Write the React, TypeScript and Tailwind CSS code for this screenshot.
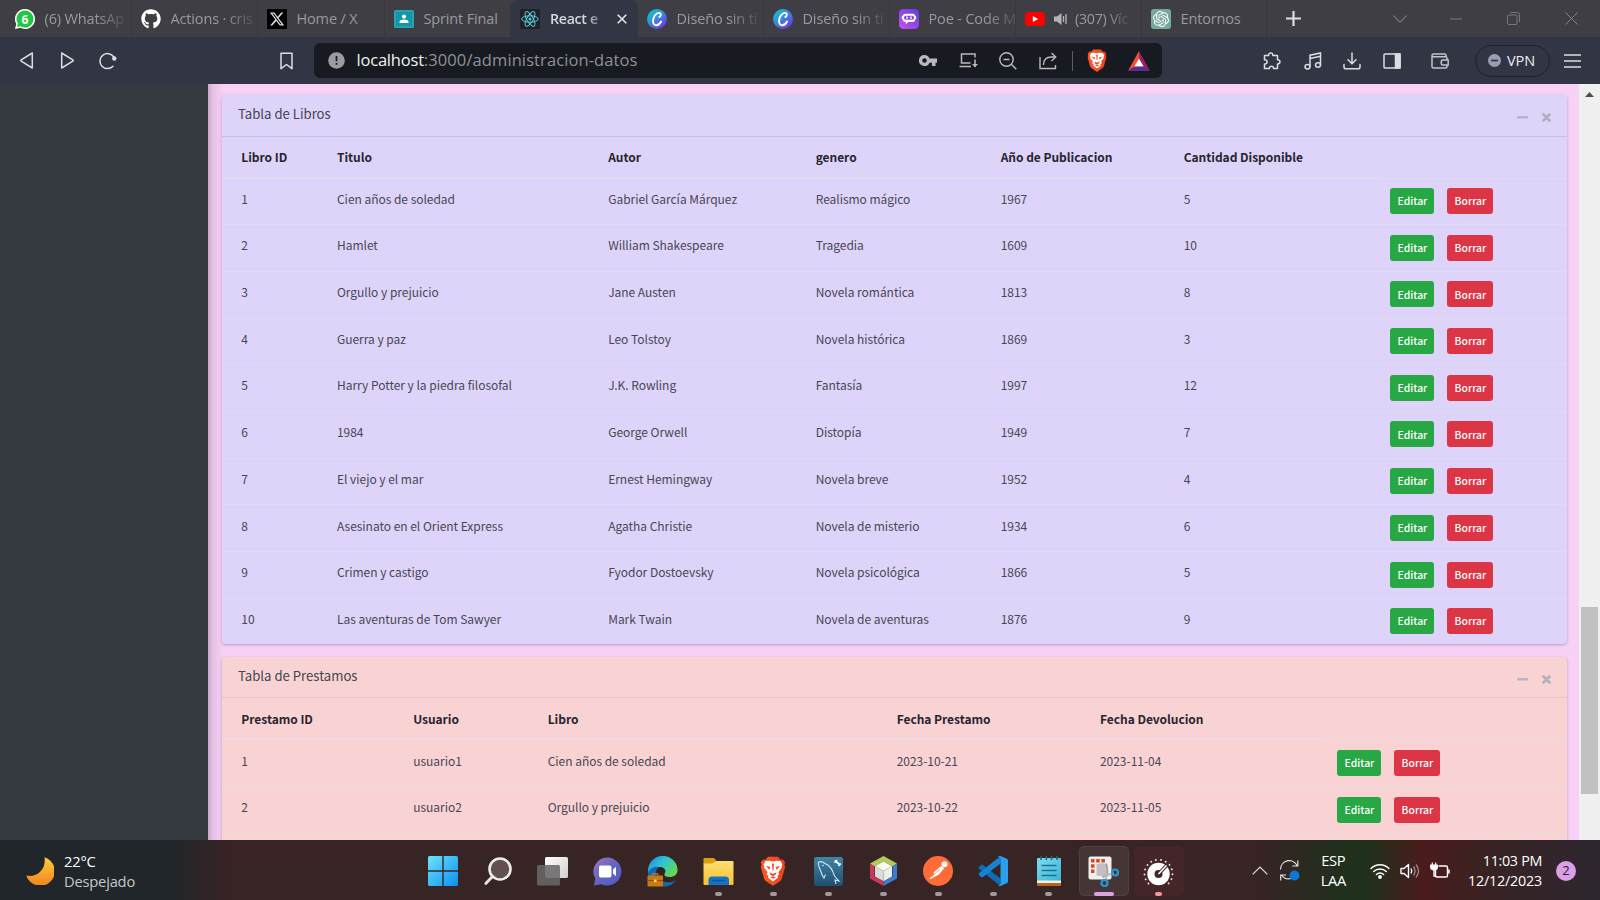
import type { ReactNode } from "react";
import { FaGithub, FaXTwitter } from "react-icons/fa6";
import { SiOpenai } from "react-icons/si";

/* ---------- shared ---------- */

const UI = "font-['Open_Sans','Noto_Sans',sans-serif]";
const BODY = "font-['Noto_Sans_CJK_JP',sans-serif]";

function Brave({ className }: { className: string }) {
  return (
    <svg viewBox="0 0 26 30" className={className}>
      <defs>
        <linearGradient id="brv" x1="0" y1="0" x2="1" y2="0">
          <stop offset="0" stopColor="#fb5a2a" />
          <stop offset="1" stopColor="#f0401a" />
        </linearGradient>
      </defs>
      <path d="M8 .8h10l2.6 2.9 2.3-.3 2.3 3-.8 2.2.8 2.4-3.3 11.4c-.4 1.2-1 2-2 2.8L14 29.3q-1 .6-2 0L6 25.200c-1-.8-1.600-1.600-2-2.800L.8 11l.8-2.400-.8-2.200 2.300-3 2.300.3z" fill="url(#brv)" />
      <path d="M13 5.500l3.500-.7 4 .3 2 3.300-.9 1.800.4 1.400-3.600 4.700.9 2.200-2 1.300 .8 1.600L13 25.500l-5.100-4.100.8-1.600-2-1.300.9-2.200L4 11.600l.4-1.400-.9-1.800 2-3.300 4-.3z" fill="#fff" />
      <path d="M5.800 9.800l4.600 1.200-.8 2.700zM20.200 9.800L15.600 11l.8 2.700zM12 7.500h2l-.5 7h-1zM9.500 16.300l3 1.400h1l3-1.400-.9 2.500-2.600 1.500-2.600-1.500zM10 21.800l3-1.500 3 1.500-3 .6z" fill="#f04b20" />
    </svg>
  );
}

/* ---------- tab strip ---------- */

function Tab({ icon, label, width, fade, sep = true }: { icon: ReactNode; label: string; width: string; fade?: boolean; sep?: boolean }) {
  return (
    <div className={`flex h-full shrink-0 items-center pl-[9px] ${width} ${sep ? "border-r border-[#37373c]" : ""}`}>
      <span className="flex h-5 w-5 shrink-0 items-center justify-center">{icon}</span>
      <span className={`ml-[9.500px] whitespace-nowrap pt-[1px] text-[14.500px] tracking-[-0.15px] text-[#99999e] ${fade ? "[mask-image:linear-gradient(to_right,black_65%,rgba(0,0,0,0.2)_100%)]" : ""}`}>{label}</span>
    </div>
  );
}

function WhatsApp() {
  return (
    <svg viewBox="0 0 20 20" className="h-5 w-5">
      <path d="M10 0a10 10 0 1 1-4.700 18.800L0 20l1.300-5A10 10 0 0 1 10 0z" fill="#fff" />
      <path d="M10 1.500A8.500 8.500 0 1 1 5.500 17.200L2 18l.9-3.400A8.500 8.500 0 0 1 10 1.500z" fill="#1fc743" />
      <text x="10" y="14.500" textAnchor="middle" fontSize="12" fontWeight="700" fill="#fff" fontFamily="Open Sans">6</text>
    </svg>
  );
}

function Classroom() {
  return (
    <svg viewBox="0 0 20 20" className="h-5 w-5">
      <rect x="0" y="1" width="20" height="18" rx="1.500" fill="#26a2b0" />
      <rect x="2" y="3" width="16" height="14" fill="#1495a6" />
      <circle cx="10" cy="7.600" r="2.100" fill="#fff" />
      <path d="M5.500 14v-1c0-1.800 2.400-2.500 4.500-2.500s4.500.7 4.500 2.500v1z" fill="#fff" />
    </svg>
  );
}

function ReactLogo() {
  return (
    <svg viewBox="0 0 20 20" className="h-5 w-5 shrink-0">
      <rect width="20" height="20" rx="2" fill="#1f2326" />
      <g fill="none" stroke="#5bc8dc" strokeWidth="1">
        <ellipse cx="10" cy="10" rx="8.300" ry="3.200" />
        <ellipse cx="10" cy="10" rx="8.300" ry="3.200" transform="rotate(60 10 10)" />
        <ellipse cx="10" cy="10" rx="8.300" ry="3.200" transform="rotate(120 10 10)" />
      </g>
      <circle cx="10" cy="10" r="1.500" fill="#5bc8dc" />
    </svg>
  );
}

function Canva() {
  return (
    <svg viewBox="0 0 20 20" className="h-5 w-5">
      <defs>
        <linearGradient id="cnv" x1="0.100" y1="0.100" x2="0.800" y2="1">
          <stop offset="0" stopColor="#12c3cc" />
          <stop offset="0.500" stopColor="#3d83e0" />
          <stop offset="1" stopColor="#7a2be6" />
        </linearGradient>
      </defs>
      <circle cx="10" cy="10" r="10" fill="url(#cnv)" />
      <path d="M12.300 8c1.700-.6 2.200-3.700.2-4.100C9.200 3.400 6 8 6 12.200c.1 2.600 1.500 4.200 3.400 4.100 2-.1 3.700-1.800 4.700-3.800" fill="none" stroke="#fff" strokeWidth="1.900" strokeLinecap="round" />
    </svg>
  );
}

function Poe() {
  return (
    <svg viewBox="0 0 20 20" className="h-5 w-5">
      <defs>
        <linearGradient id="poe" x1="1" y1="0" x2="0" y2="1">
          <stop offset="0" stopColor="#5b40dc" />
          <stop offset="1" stopColor="#cc4df0" />
        </linearGradient>
      </defs>
      <rect width="20" height="20" rx="4.500" fill="url(#poe)" />
      <path d="M6 4.800h8a2 2 0 0 1 2 1.800c1.700.2 1.700 4 0 4.200a2 2 0 0 1-2 2.200H9.200L6.800 15.500V13H6a2 2 0 0 1-2-2.200c-1.700-.2-1.700-4 0-4.200a2 2 0 0 1 2-1.800z" fill="#fff" />
      <rect x="5" y="6.800" width="10" height="4" rx="1.800" fill="#8a44de" />
      <path d="M8 8v1.600M12 8v1.600" stroke="#fff" strokeWidth="1.400" strokeLinecap="round" />
    </svg>
  );
}

function TabStrip() {
  return (
    <div className="flex h-[37px] shrink-0 items-stretch bg-[#3e3e44] pl-[6px]">
      <Tab icon={<WhatsApp />} label="(6) WhatsAp" width="w-[126px]" fade />
      <Tab icon={<FaGithub className="h-5 w-5 text-white" />} label="Actions · cris" width="w-[126px]" fade />
      <Tab icon={<span className="flex h-5 w-5 items-center justify-center bg-black"><FaXTwitter className="h-4 w-4 text-[#d8d8d8]" /></span>} label="Home / X" width="w-[127px]" />
      <Tab icon={<Classroom />} label="Sprint Final" width="w-[125px]" sep={false} />
      <div className="flex w-[128px] shrink-0 items-center rounded-t-lg bg-[#323544] pl-[10px]">
        <ReactLogo />
        <span className="ml-[10px] w-[51px] whitespace-nowrap pt-[1px] text-[14.200px] font-semibold tracking-[-0.3px] text-[#d5d6dc] [mask-image:linear-gradient(to_right,black_72%,rgba(0,0,0,0.300)_100%)]">React e</span>
        <svg viewBox="0 0 10 10" className="ml-[16px] h-[10px] w-[10px]" stroke="#e4e5ea" strokeWidth="1.600"><path d="M.7.7l8.600 8.600M9.300.7L.7 9.300" /></svg>
      </div>
      <Tab icon={<Canva />} label="Diseño sin tí" width="w-[126px]" fade />
      <Tab icon={<Canva />} label="Diseño sin tí" width="w-[126px]" fade />
      <Tab icon={<Poe />} label="Poe - Code M" width="w-[126px]" fade />
      <div className="flex w-[126px] shrink-0 items-center border-r border-[#37373c] pl-[9px]">
        <svg viewBox="0 0 20 14" className="h-[14px] w-[20px] shrink-0">
          <rect width="20" height="14" rx="3.500" fill="#f00" />
          <path d="M7.800 4v6l5.400-3z" fill="#fff" />
        </svg>
        <svg viewBox="0 0 14 12" className="ml-[9px] h-3 w-[14px] shrink-0" fill="#b5b5b8">
          <path d="M0 3.500h3L7.500 0v12L3 8.500H0z" />
          <path d="M9.500 3v6M12 1v10" stroke="#b5b5b8" strokeWidth="1.300" />
        </svg>
        <span className="ml-[7px] whitespace-nowrap pt-[1px] text-[14.200px] tracking-[-0.25px] text-[#99999e] [mask-image:linear-gradient(to_right,black_60%,rgba(0,0,0,0.2)_100%)]">(307) Víc</span>
      </div>
      <Tab icon={<span className="flex h-5 w-5 items-center justify-center rounded-[3px] bg-[#74aa9c]"><SiOpenai className="h-4 w-4 text-white" /></span>} label="Entornos" width="w-[125px]" />
      <div className="flex flex-1 items-center">
        <svg viewBox="0 0 15 15" className="ml-[19px] h-[15px] w-[15px]" stroke="#dedee2" strokeWidth="2.200"><path d="M7.500 0v15M0 7.500h15" /></svg>
        <svg viewBox="0 0 14 8" className="ml-[92px] h-2 w-[14px]" fill="none" stroke="#77777c" strokeWidth="1.100"><path d="M.5.5L7 7.300 13.500.5" /></svg>
        <svg viewBox="0 0 12 2" className="ml-[43px] h-[2px] w-3" stroke="#77777c"><path d="M0 1h12" /></svg>
        <svg viewBox="0 0 13 13" className="ml-[45px] h-[13px] w-[13px]" fill="none" stroke="#77777c"><rect x=".5" y="3" width="9.500" height="9.500" rx="1" /><path d="M3 .6h7.500a2 2 0 0 1 2 2V10" /></svg>
        <svg viewBox="0 0 13 13" className="ml-[45px] h-[13px] w-[13px]" stroke="#85858a"><path d="M.5.5l12 12M12.500.5l-12 12" /></svg>
      </div>
    </div>
  );
}

/* ---------- address row ---------- */

function Toolbar() {
  return (
    <div className="flex h-[47px] shrink-0 items-center bg-[#323544] text-[#dcdde3]">
      <svg viewBox="0 0 14 17" className="ml-[20px] h-[17px] w-[14px]" fill="none" stroke="currentColor" strokeWidth="1.500" strokeLinejoin="round"><path d="M12.300 1v15L1.200 9.200q-.7-.7 0-1.400z" /></svg>
      <svg viewBox="0 0 14 17" className="ml-[26px] h-[17px] w-[14px]" fill="none" stroke="currentColor" strokeWidth="1.500" strokeLinejoin="round"><path d="M1.700 1v15l11.100-6.800q.7-.7 0-1.400z" /></svg>
      <svg viewBox="0 0 18 18" className="ml-[25px] h-[18px] w-[18px]" fill="none" stroke="currentColor" strokeWidth="1.500"><path d="M14 14.200A7.500 7.500 0 1 1 14.800 5" strokeLinecap="round" /><circle cx="15.300" cy="6.500" r="2.200" fill="currentColor" stroke="none" /></svg>
      <svg viewBox="0 0 13 18" className="ml-[163px] h-[18px] w-[13px]" fill="none" stroke="currentColor" strokeWidth="1.500" strokeLinejoin="round"><path d="M1 1.200h11v15.500l-5.500-4.200L1 16.700z" /></svg>
      <div className="ml-[21px] flex h-[35px] w-[848px] items-center rounded-[6px] bg-[#181a21] pl-[14px] text-[#b9bac0]">
        <svg viewBox="0 0 17 17" className="h-[17px] w-[17px] shrink-0"><circle cx="8.500" cy="8.500" r="8.300" fill="#9b9ca2" /><path d="M8.500 4v5.300M8.500 11v1.800" stroke="#181a21" strokeWidth="1.700" /></svg>
        <span className="ml-[11.500px] w-[562.500px] whitespace-nowrap text-[16.500px] tracking-[0.100px] text-[#8f9197]"><span className="tracking-[-0.2px] text-[#f0f1f4]">localhost</span>:3000/administracion-datos</span>
        <svg viewBox="0 0 18 12" className="h-3 w-[18px] shrink-0" fill="currentColor"><path fillRule="evenodd" d="M5.500 0a5.500 5.500 0 0 1 5 3.500H18v4.200h-1.500V11H13V7.700h-2.500A5.500 5.500 0 1 1 5.500 0zm0 3.200a2.300 2.300 0 1 0 0 4.600 2.300 2.300 0 0 0 0-4.600z" /></svg>
        <svg viewBox="0 0 19 15" className="ml-[22px] h-[15px] w-[19px] shrink-0" fill="none" stroke="currentColor" strokeWidth="1.500"><path d="M11.500 10H2.500V1h13.500v3.500M.5 13.500H12M16 6.500V14" /><path d="M13 11l3 3.300 3-3.300z" fill="currentColor" stroke="none" /></svg>
        <svg viewBox="0 0 18 18" className="ml-[21px] h-[18px] w-[18px] shrink-0" fill="none" stroke="currentColor" strokeWidth="1.400"><circle cx="7.500" cy="7.500" r="6.700" /><path d="M12.300 12.300L17.300 17.300M4.500 7.500h6" /></svg>
        <svg viewBox="0 0 18 18" className="ml-[22px] h-[18px] w-[18px] shrink-0" fill="none" stroke="currentColor" strokeWidth="1.400"><path d="M1 5v11.500h15.500V13M4.500 13c0-5 3-8 8-8h4M12.500 1l4.200 4-4.200 4" /></svg>
        <span className="ml-[15px] h-5 w-px bg-[#5a5c66]" />
        <Brave className="ml-[14px] h-[23px] w-5 shrink-0" />
        <svg viewBox="0 0 22 20" className="ml-[21px] h-5 w-[22px] shrink-0"><path d="M11 0L0 20l7-4.500L11 8z" fill="#f2542d" /><path d="M11 0l11 20-7-4.500L11 8z" fill="#9e1f63" /><path d="M0 20h22l-7-4.500H7z" fill="#5b2d90" /><path d="M11 7.500l4.600 8H6.400z" fill="#fff" /></svg>
      </div>
      <svg viewBox="0 0 18 18" className="ml-[101px] h-[18px] w-[18px]" fill="none" stroke="currentColor" strokeWidth="1.500" strokeLinejoin="round"><path d="M1.500 3.500h4.200c-.5-3.500 4.600-3.500 4.100 0h4.700v4.200c3.300-.4 3.300 4.600 0 4.200v4.600h-4c.3-3-4.300-3-4 0h-5v-4.500c3.500.4 3.500-4.600 0-4.200z" /></svg>
      <svg viewBox="0 0 18 18" className="ml-[23px] h-[18px] w-[18px]" fill="none" stroke="currentColor" strokeWidth="1.500"><path d="M6 14.500V3.200L16.500 1v12M6 6.500l10.500-2.200" /><ellipse cx="3.500" cy="14.800" rx="2.500" ry="2.200" /><ellipse cx="14" cy="13" rx="2.500" ry="2.200" /></svg>
      <svg viewBox="0 0 18 18" className="ml-[21px] h-[18px] w-[18px]" fill="none" stroke="currentColor" strokeWidth="1.500" strokeLinecap="round"><path d="M9 1v10.500M5 7.800l4 4 4-4M1 12.500v2.500q0 1.800 1.800 1.800h12.400q1.800 0 1.800-1.800v-2.500" /></svg>
      <svg viewBox="0 0 18 16" className="ml-[22px] h-4 w-[18px]" fill="none" stroke="currentColor" strokeWidth="1.500"><rect x="1" y="1" width="16" height="14" rx="1" /><path d="M12.500 1h4.500v14h-4.500z" fill="currentColor" /></svg>
      <svg viewBox="0 0 18 16" className="ml-[30px] h-4 w-[18px]" fill="none" stroke="#c3c4cb" strokeWidth="1.500"><path d="M15 4V2.500Q15 1 13.500 1H2.500Q1 1 1 2.500v11Q1 15 2.500 15h12q1.500 0 1.500-1.500V12M1 3.800h13.500Q16 3.800 16 5.300V7M17.200 7h-5.500q-1.500 0-1.500 2.500t1.500 2.500h5.500z" /></svg>
      <div className="ml-[26px] flex h-8 w-[75px] items-center rounded-full border border-[#20222c] pl-[12px] text-[14.500px] tracking-[-0.1px] text-[#eceef3]">
        <svg viewBox="0 0 13 13" className="h-[13px] w-[13px]"><circle cx="6.500" cy="6.500" r="6.500" fill="#9a9eb2" /><path d="M3 6.500h7" stroke="#323544" strokeWidth="1.700" /></svg>
        <span className="ml-[6px]">VPN</span>
      </div>
      <svg viewBox="0 0 17 14" className="ml-[14px] h-[14px] w-[17px]" stroke="currentColor" strokeWidth="1.700"><path d="M0 1h17M0 7h17M0 13h17" /></svg>
    </div>
  );
}

/* ---------- page ---------- */

type Theme = { bg: string; line: string; rule: string; headRule: string };
const lilac: Theme = { bg: "bg-[#ded4f9]", line: "border-[#c9bfe2]", rule: "border-[#dfdbf1]", headRule: "border-[#dfddec]" };
const rose: Theme = { bg: "bg-[#f9d3d4]", line: "border-[#e6c3c5]", rule: "border-[#ebdcdf]", headRule: "border-[#e5dde1]" };

const books = [
  ["Cien años de soledad", "Gabriel García Márquez", "Realismo mágico", "1967", "5"],
  ["Hamlet", "William Shakespeare", "Tragedia", "1609", "10"],
  ["Orgullo y prejuicio", "Jane Austen", "Novela romántica", "1813", "8"],
  ["Guerra y paz", "Leo Tolstoy", "Novela histórica", "1869", "3"],
  ["Harry Potter y la piedra filosofal", "J.K. Rowling", "Fantasía", "1997", "12"],
  ["1984", "George Orwell", "Distopía", "1949", "7"],
  ["El viejo y el mar", "Ernest Hemingway", "Novela breve", "1952", "4"],
  ["Asesinato en el Orient Express", "Agatha Christie", "Novela de misterio", "1934", "6"],
  ["Crimen y castigo", "Fyodor Dostoevsky", "Novela psicológica", "1866", "5"],
  ["Las aventuras de Tom Sawyer", "Mark Twain", "Novela de aventuras", "1876", "9"],
];
const loans = [
  ["usuario1", "Cien años de soledad", "2023-10-21", "2023-11-04"],
  ["usuario2", "Orgullo y prejuicio", "2023-10-22", "2023-11-05"],
];

function DataCard({ title, theme, heads, rows, cols, trailing }: { title: string; theme: Theme; heads: string[]; rows: string[][]; cols: string; trailing?: boolean }) {
  return (
    <section className={`shrink-0 overflow-hidden rounded-[4px] shadow-[0_1px_3px_rgba(0,0,0,0.25)] ${theme.bg}`}>
      <header className={`flex h-[41.500px] items-center justify-between border-b px-[16px] ${theme.line}`}>
        <h3 className="pb-[2px] text-[13.150px] text-[#444452]">{title}</h3>
        <div className="flex items-center gap-[14px] pt-[4px]">
          <svg viewBox="0 0 11 3" className="h-[3px] w-[11px]"><rect width="11" height="2.600" rx="1" fill="#b3b6c4" /></svg>
          <svg viewBox="0 0 9 9" className="h-[9px] w-[9px]" stroke="#adb0bd" strokeWidth="2.600" strokeLinecap="round"><path d="M1.500 1.500l6 6M7.500 1.500l-6 6" /></svg>
        </div>
      </header>
      <div className={`grid h-[41px] text-[12px] font-bold tracking-[-0.030px] text-[#26262f] ${cols}`}>
        {heads.map((h) => (
          <div key={h} className={`flex items-center whitespace-nowrap border-b pl-[11.700px] pt-[1px] first:pl-[19.300px] ${theme.headRule}`}>{h}</div>
        ))}
      </div>
      {rows.map((r, i) => (
        <div key={i} className={`grid h-[46.690px] border-t text-[12px] tracking-[-0.030px] text-[#474754] ${cols} ${theme.rule}`}>
          {[String(i + 1), ...r].map((c, j) => (
            <div key={j} className="whitespace-nowrap pl-[11.700px] pt-[10.200px] leading-[20px] first:pl-[19.300px]">{c}</div>
          ))}
          <div className="flex items-start gap-[13px] pl-[11.500px] pt-[9.500px] text-[10.400px] font-medium tracking-normal text-white">
            <button className="flex h-[26px] w-[44px] items-center justify-center rounded-[3px] bg-[#28a745]">Editar</button>
            <button className="flex h-[26px] w-[46px] items-center justify-center rounded-[3px] bg-[#dc3545]">Borrar</button>
          </div>
        </div>
      ))}
      {trailing && <div className={`h-[46.690px] border-t ${theme.rule}`} />}
    </section>
  );
}

function Page() {
  return (
    <div className={`flex h-[756px] shrink-0 overflow-hidden ${BODY}`}>
      <aside className="w-[208px] shrink-0 bg-[#343a40]" />
      <main className="flex min-w-0 flex-1 flex-col gap-[12.600px] bg-[#f8d1f6] bg-[linear-gradient(to_right,#c9a8c9_0px,#e6c2e5_5px,#f8d1f6_16px)] pl-[14px] pr-[12px] pt-[11px]">
        <DataCard
          title="Tabla de Libros"
          theme={lilac}
          heads={["Libro ID", "Titulo", "Autor", "genero", "Año de Publicacion", "Cantidad Disponible"]}
          rows={books}
          cols="grid-cols-[103.300px_271.200px_207.500px_185px_183px_207px_1fr]"
        />
        <DataCard
          title="Tabla de Prestamos"
          theme={rose}
          heads={["Prestamo ID", "Usuario", "Libro", "Fecha Prestamo", "Fecha Devolucion"]}
          rows={loans}
          cols="grid-cols-[179.500px_134.500px_349px_203.300px_237.700px_1fr]"
          trailing
        />
      </main>
      <div className="flex w-[21px] shrink-0 flex-col items-center bg-[#f0f0f0] pt-[8px]">
        <svg viewBox="0 0 9 5" className="h-[5px] w-[9px]"><path d="M0 5L4.500 0 9 5z" fill="#505050" /></svg>
        <div className="mt-[510px] h-[187px] w-[17px] bg-[#c1c1c1]" />
      </div>
    </div>
  );
}

/* ---------- taskbar ---------- */

function Slot({ children, mark, box }: { children: ReactNode; mark?: string; box?: string }) {
  return (
    <div className="flex w-[55.100px] shrink-0 justify-center">
      <div className={`flex h-[50px] w-[50px] flex-col items-center rounded-[5px] pt-[10px] ${box ?? ""}`}>
        <div className="flex h-[31px] w-[31px] items-center justify-center">{children}</div>
        {mark && <div className={`mt-[5px] h-[4px] shrink-0 rounded-full ${mark}`} />}
      </div>
    </div>
  );
}

const dim = "w-[7px] bg-[#a39a9b]";

function Taskbar() {
  return (
    <div className="flex h-[60px] shrink-0 items-center bg-[linear-gradient(to_right,#20262a_0px,#20262a_170px,#372425_225px,#372425_1260px,#1f301c_1345px,#22301c_1370px,#4b1b1e_1425px,#40201f_1460px,#362325_1500px,#2e2730_1600px)] pt-[1px] text-white">
      <div className="flex w-[415px] items-center pl-[26px]">
        <svg viewBox="0 0 28 28" className="h-7 w-7">
          <defs><linearGradient id="moon" x1="0" y1="0" x2="0" y2="1"><stop offset="0" stopColor="#fccb3b" /><stop offset="1" stopColor="#f3841e" /></linearGradient></defs>
          <path d="M18.500.3A14.600 14.600 0 1 1 .3 18.500C11 21 20.500 12 18.500.3z" fill="url(#moon)" />
        </svg>
        <div className="ml-[10px] pt-[1px] text-[14.700px] leading-[20px] tracking-[-0.2px]"><div className="tracking-[-0.2px]">22°C</div><div className="text-[#c6c7c8]">Despejado</div></div>
      </div>
      <Slot>
        <svg viewBox="0 0 30 30" className="h-[30px] w-[30px]"><defs><linearGradient id="win" x1="0" y1="0" x2="1" y2="1"><stop offset="0" stopColor="#6fe3fb" /><stop offset="1" stopColor="#0a8ff0" /></linearGradient></defs><path d="M1.500 0h12.800v14.300H0V1.500Q0 0 1.500 0zM15.700 0h12.800Q30 0 30 1.500v12.800H15.700zM0 15.700h14.300V30H1.500Q0 30 0 28.500zM15.700 15.700H30v12.800q0 1.500-1.500 1.500H15.700z" fill="url(#win)" /></svg>
      </Slot>
      <Slot>
        <svg viewBox="0 0 28 28" className="h-[28px] w-[28px]"><path d="M8.500 19.500L2 26.300" stroke="#e6e2e2" strokeWidth="3" strokeLinecap="round" /><circle cx="16" cy="12" r="10.500" fill="#64504f" stroke="#ededed" strokeWidth="2.600" /></svg>
      </Slot>
      <Slot>
        <svg viewBox="0 0 31 29" className="h-[29px] w-[31px]"><defs><linearGradient id="tv" x1="0" y1="0" x2="1" y2="1"><stop offset="0" stopColor="#fff" /><stop offset="1" stopColor="#cfcfcf" /></linearGradient></defs><rect x="8" y="0" width="23" height="21" rx="1.500" fill="url(#tv)" /><rect x="0" y="8" width="23" height="20.500" rx="1.500" fill="#6a6868" opacity=".88" /></svg>
      </Slot>
      <Slot>
        <svg viewBox="0 0 29 29" className="h-[29px] w-[29px]"><defs><linearGradient id="cht" x1="0" y1="0" x2="1" y2="1"><stop offset="0" stopColor="#a176b9" /><stop offset="0.500" stopColor="#6264c4" /><stop offset="1" stopColor="#5157c6" /></linearGradient></defs><path d="M14.500.5a14 14 0 1 1-6 26.700L1 28.500 2.300 21.500A14 14 0 0 1 14.500.5z" fill="url(#cht)" /><rect x="6" y="8.500" width="12.500" height="12" rx="1.800" fill="#fff" /><path d="M20 12.500l3-2.800v9.600l-3-2.800z" fill="#fff" /></svg>
      </Slot>
      <Slot>
        <svg viewBox="0 0 31 31" className="h-[31px] w-[31px]">
          <defs><linearGradient id="edg" x1="0" y1="0" x2="1" y2=".6"><stop offset="0" stopColor="#1f86d6" /><stop offset=".5" stopColor="#2fc3d6" /><stop offset="1" stopColor="#62d84e" /></linearGradient></defs>
          <path d="M1 15A14.800 14.800 0 0 1 30.500 13c.5 5-3 8-8 8-4 0-6-1.600-5-3.200 2.500-4-1-7.300-5.500-6.800C7 11.500 3 14 1 18z" fill="url(#edg)" />
          <path d="M1 17c1-4 6-7 11-6-3.500 2-4 7-1 11 4 5 11 5.500 17.500 2.500C25 30 19 31 14 30.300 5 29 .500 23 1 17z" fill="#1667ae" />
          <path d="M13 11.500c-3.500 2.500-3.300 8 0 11 3.500 3.500 8 4 12 3-5-1-8.500-3.700-7.800-7.700 1.300-3-.7-6-4.200-6.300z" fill="#2e2224" />
          <rect x=".5" y="19.500" width="15.500" height="11" rx="1" fill="#c87b12" /><path d="M.5 24.500H16" stroke="#8c4f08" strokeWidth="1.200" /><rect x="7" y="23.500" width="2.600" height="2.600" fill="#ffd95a" /><path d="M5.500 19.500v-1.700h5.500v1.700" fill="none" stroke="#d58a1c" />
        </svg>
      </Slot>
      <Slot mark={dim}>
        <svg viewBox="0 0 31 29" className="h-[29px] w-[31px]"><defs><linearGradient id="fld" x1="0" y1="0" x2="0" y2="1"><stop offset="0" stopColor="#ffdf73" /><stop offset="1" stopColor="#f8c22d" /></linearGradient></defs><path d="M1.500 1H11l2.500 3-3 3H.5V2q0-1 1-1z" fill="#dc9d12" /><path d="M.5 6.500H9L13.500 4h16q1 0 1 1v22q0 1-1 1h-28q-1 0-1-1z" fill="url(#fld)" /><path d="M5.500 28v-5q0-3.500 3.500-3.500h13.500Q26 19.500 26 23v5z" fill="#1273c8" /><path d="M9.500 23.500h12" stroke="#0c4f92" strokeWidth="1.600" strokeLinecap="round" /></svg>
      </Slot>
      <Slot mark={dim}><Brave className="h-[30px] w-[26px]" /></Slot>
      <Slot mark={dim}>
        <svg viewBox="0 0 29 29" className="h-[29px] w-[29px]"><defs><linearGradient id="sql" x1="0" y1="0" x2="0" y2="1"><stop offset="0" stopColor="#3f86a8" /><stop offset="1" stopColor="#1f4e70" /></linearGradient></defs><rect width="29" height="29" rx="2.500" fill="url(#sql)" /><path d="M7.500 16C5.500 11 3.500 7 4.500 5.500 6 4 9 5 11 6.500c5 2 8 7 9.500 12.500l4.500 5-4-1 1 4M7.500 16c.5 2 1 3.500 2.500 5l1.500-3.500" fill="none" stroke="#d6e4ec" strokeWidth="1.100" /><circle cx="9" cy="8.500" r=".8" fill="#d6e4ec" /><path d="M21 3.500l5 4.500M20.500 5.500l2.500-2.500M24.500 9l2.200-2.500" stroke="#fff" strokeWidth="1.700" /></svg>
      </Slot>
      <Slot mark={dim}>
        <svg viewBox="0 0 27 30" className="h-[30px] w-[27px]"><path d="M13.500 0L27 7.500l-4.500 3-9-5-9 5L0 7.500z" fill="#b0cb58" /><path d="M0 7.500l4.500 3v10l9 5V30L0 22.500z" fill="#c9375e" /><path d="M27 7.500v15L13.500 30v-4.500l9-5v-10z" fill="#3d7bd0" /><path d="M13.500 5.500l8.500 4.700-8.500 4.700L5 10.200z" fill="#f8faf3" /><path d="M5 10.200l8.500 4.700v10.300L5 20.400z" fill="#d5dfda" /><path d="M22 10.200l-8.500 4.700v10.300l8.500-4.800z" fill="#eaf1e6" /></svg>
      </Slot>
      <Slot mark={dim}>
        <svg viewBox="0 0 30 30" className="h-[30px] w-[30px]"><circle cx="15" cy="15" r="15" fill="#ff6c37" /><circle cx="21.500" cy="8.300" r="3" fill="#fff" /><path d="M18.500 10l2.800 2.500-5.500 6-8 4.500-1.500-.5 2-1.500zM10.500 16.500l7-6 1.500 1-7 7z" fill="#fff" /><path d="M20 13l-.8 4M9 20.500l8-7.500" stroke="#ff6c37" strokeWidth=".6" /></svg>
      </Slot>
      <Slot mark={dim}>
        <svg viewBox="0 0 30 30" className="h-[30px] w-[30px]"><path d="M1 11l2-2q1-.8 2 0l17.500 13.500V30L.8 12.700Q0 12 1 11z" fill="#0f6db5" /><path d="M1 19l2 2q1 .8 2 0L22.500 7.500V0L.8 17.300Q0 18 1 19z" fill="#1583cf" /><path d="M22.500 0l6.300 2.800Q30 3.400 30 4.500v21q0 1.100-1.200 1.700L22.500 30q-1.500.3-2.500-1 2 .8 2.500-1.500v-25Q22 .2 20 1q1-1.300 2.500-1z" fill="#2a9fec" /></svg>
      </Slot>
      <Slot mark={dim}>
        <svg viewBox="0 0 24 30" className="h-[30px] w-6"><defs><linearGradient id="ntp" x1="0" y1="0" x2="1" y2="1"><stop offset="0" stopColor="#7fdcea" /><stop offset="1" stopColor="#3eb3d4" /></linearGradient></defs><path d="M0 24h24v5q0 1-1 1H1q-1 0-1-1z" fill="#b9651f" /><path d="M0 3q0-1 1-1h22q1 0 1 1v22H0z" fill="url(#ntp)" /><path d="M0 24.500h24V27H0z" fill="#f3efe9" /><path d="M4 0v4M9.300 0v4M14.600 0v4M20 0v4" stroke="#15658a" strokeWidth="1.600" /><path d="M4.500 9.500h15M4.500 14.500h15M4.500 19.500h15" stroke="#15749b" strokeWidth="1.500" /></svg>
      </Slot>
      <Slot mark="w-[20px] bg-[#d9a2e0]" box="bg-[#463536] shadow-[inset_0_0_0_1px_rgba(255,255,255,0.060)]">
        <svg viewBox="0 0 31 31" className="h-[31px] w-[31px]"><rect x=".5" y=".5" width="23" height="23" rx="2" fill="#f1eeee" /><path d="M3 3h3.500v3.500H3zM8.200 3h3.500v3.500H8.200zM13.400 3h3.500v3.500h-3.500zM3 8.200h3.500v3.500H3zM3 13.400h3.500v3.500H3z" fill="#d6491b" /><path d="M8.500 8.500q5.500-2.500 11 0v12q-5 0-11-1z" fill="#c4bfc2" /><path d="M18 7.500q2 5 1.500 10l-5 4" fill="none" stroke="#9d989c" strokeWidth="1.500" /><path d="M26 17.500l-9.500 2M17.500 25l1-8" stroke="#b9b9bd" strokeWidth="2.200" /><circle cx="27" cy="16.500" r="3" fill="none" stroke="#2699cf" strokeWidth="2.200" /><circle cx="16.500" cy="27" r="3" fill="none" stroke="#2699cf" strokeWidth="2.200" /></svg>
      </Slot>
      <Slot mark="w-[7px] bg-[#f3989f]" box="bg-[#452628]">
        <svg viewBox="0 0 31 31" className="h-[31px] w-[31px]"><path d="M5.500 27.500a14 14 0 1 1 20 0" fill="none" stroke="#e9e4e4" strokeWidth="1.900" strokeDasharray=".1 4.900" strokeLinecap="round" /><circle cx="15.500" cy="18" r="11.200" fill="#fff" /><circle cx="15.500" cy="18" r="4" fill="#452628" /><path d="M16.500 17l8.500-9" stroke="#452628" strokeWidth="3.400" /><path d="M15.500 18l8-8.500" stroke="#fff" strokeWidth="1.600" /></svg>
      </Slot>
      <div className="flex flex-1 items-center pl-[66px]">
        <svg viewBox="0 0 16 9" className="h-[9px] w-4" fill="none" stroke="#e2dede" strokeWidth="1.200"><path d="M.7 8.300L8 1l7.300 7.300" /></svg>
        <svg viewBox="0 0 21 21" className="ml-[11px] h-[21px] w-[21px]" fill="none" stroke="#e6e2e2" strokeWidth="1.200"><path d="M1.500 9.500A8.700 8.700 0 0 1 18 5.500M18.800.5V6h-5.500M12 18.500A8.700 8.700 0 0 1 2.500 15M1.700 20.500V15h5.500" /><circle cx="15.500" cy="15.500" r="5" fill="#0a78d6" stroke="none" /></svg>
        <div className="ml-[17px] w-[32px] text-center text-[14.700px] leading-[19.500px] tracking-[-0.300px]"><div>ESP</div><div>LAA</div></div>
        <svg viewBox="0 0 20 16" className="ml-[20.500px] h-4 w-5" fill="none" stroke="#fff" strokeWidth="1.400" strokeLinecap="round"><path d="M1 5.500a12.700 12.700 0 0 1 18 0M3.700 8.600a8.900 8.900 0 0 1 12.600 0M6.400 11.500a5.100 5.100 0 0 1 7.200 0" /><circle cx="10" cy="14" r="1.200" fill="#fff" /></svg>
        <svg viewBox="0 0 20 16" className="ml-[10px] h-4 w-5" fill="none" stroke="#fff" strokeWidth="1.400" strokeLinejoin="round"><path d="M1 5.500h3L8.500 1.500v13L4 10.500H1z" /><path d="M11 5.500q1.500 2.500 0 5" /><path d="M13.500 3.500q3 4.500 0 9M16 1.500q5 6.500 0 13" opacity=".45" /></svg>
        <svg viewBox="0 0 20 17" className="ml-[10px] h-[17px] w-5" fill="none" stroke="#fff" strokeWidth="1.400"><path d="M8.500 4h7.500q1.500 0 1.500 1.500v8q0 1.500-1.500 1.500H7q-1.500 0-1.500-1.500V8M19 7.500v4" /><path d="M.7 3.200h6.600v2.300Q7.300 8 4 8T.7 5.500zM2.300 3V.5M5.700 3V.5" fill="#fff" strokeWidth="1.200" /><path d="M4 8v6h2" /></svg>
        <div className="ml-auto mr-[14px] text-right text-[14.300px] leading-[19.500px] tracking-[-0.2px]"><div className="tracking-[-0.300px]">11:03 PM</div><div>12/12/2023</div></div>
        <div className="mr-[24px] flex h-5 w-5 items-center justify-center rounded-full bg-[#db9fe5] text-[13px] text-[#2a1a2c]">2</div>
      </div>
    </div>
  );
}

export default function App() {
  return (
    <div className={`flex h-[900px] w-[1600px] flex-col overflow-hidden ${UI}`}>
      <TabStrip />
      <Toolbar />
      <Page />
      <Taskbar />
    </div>
  );
}
